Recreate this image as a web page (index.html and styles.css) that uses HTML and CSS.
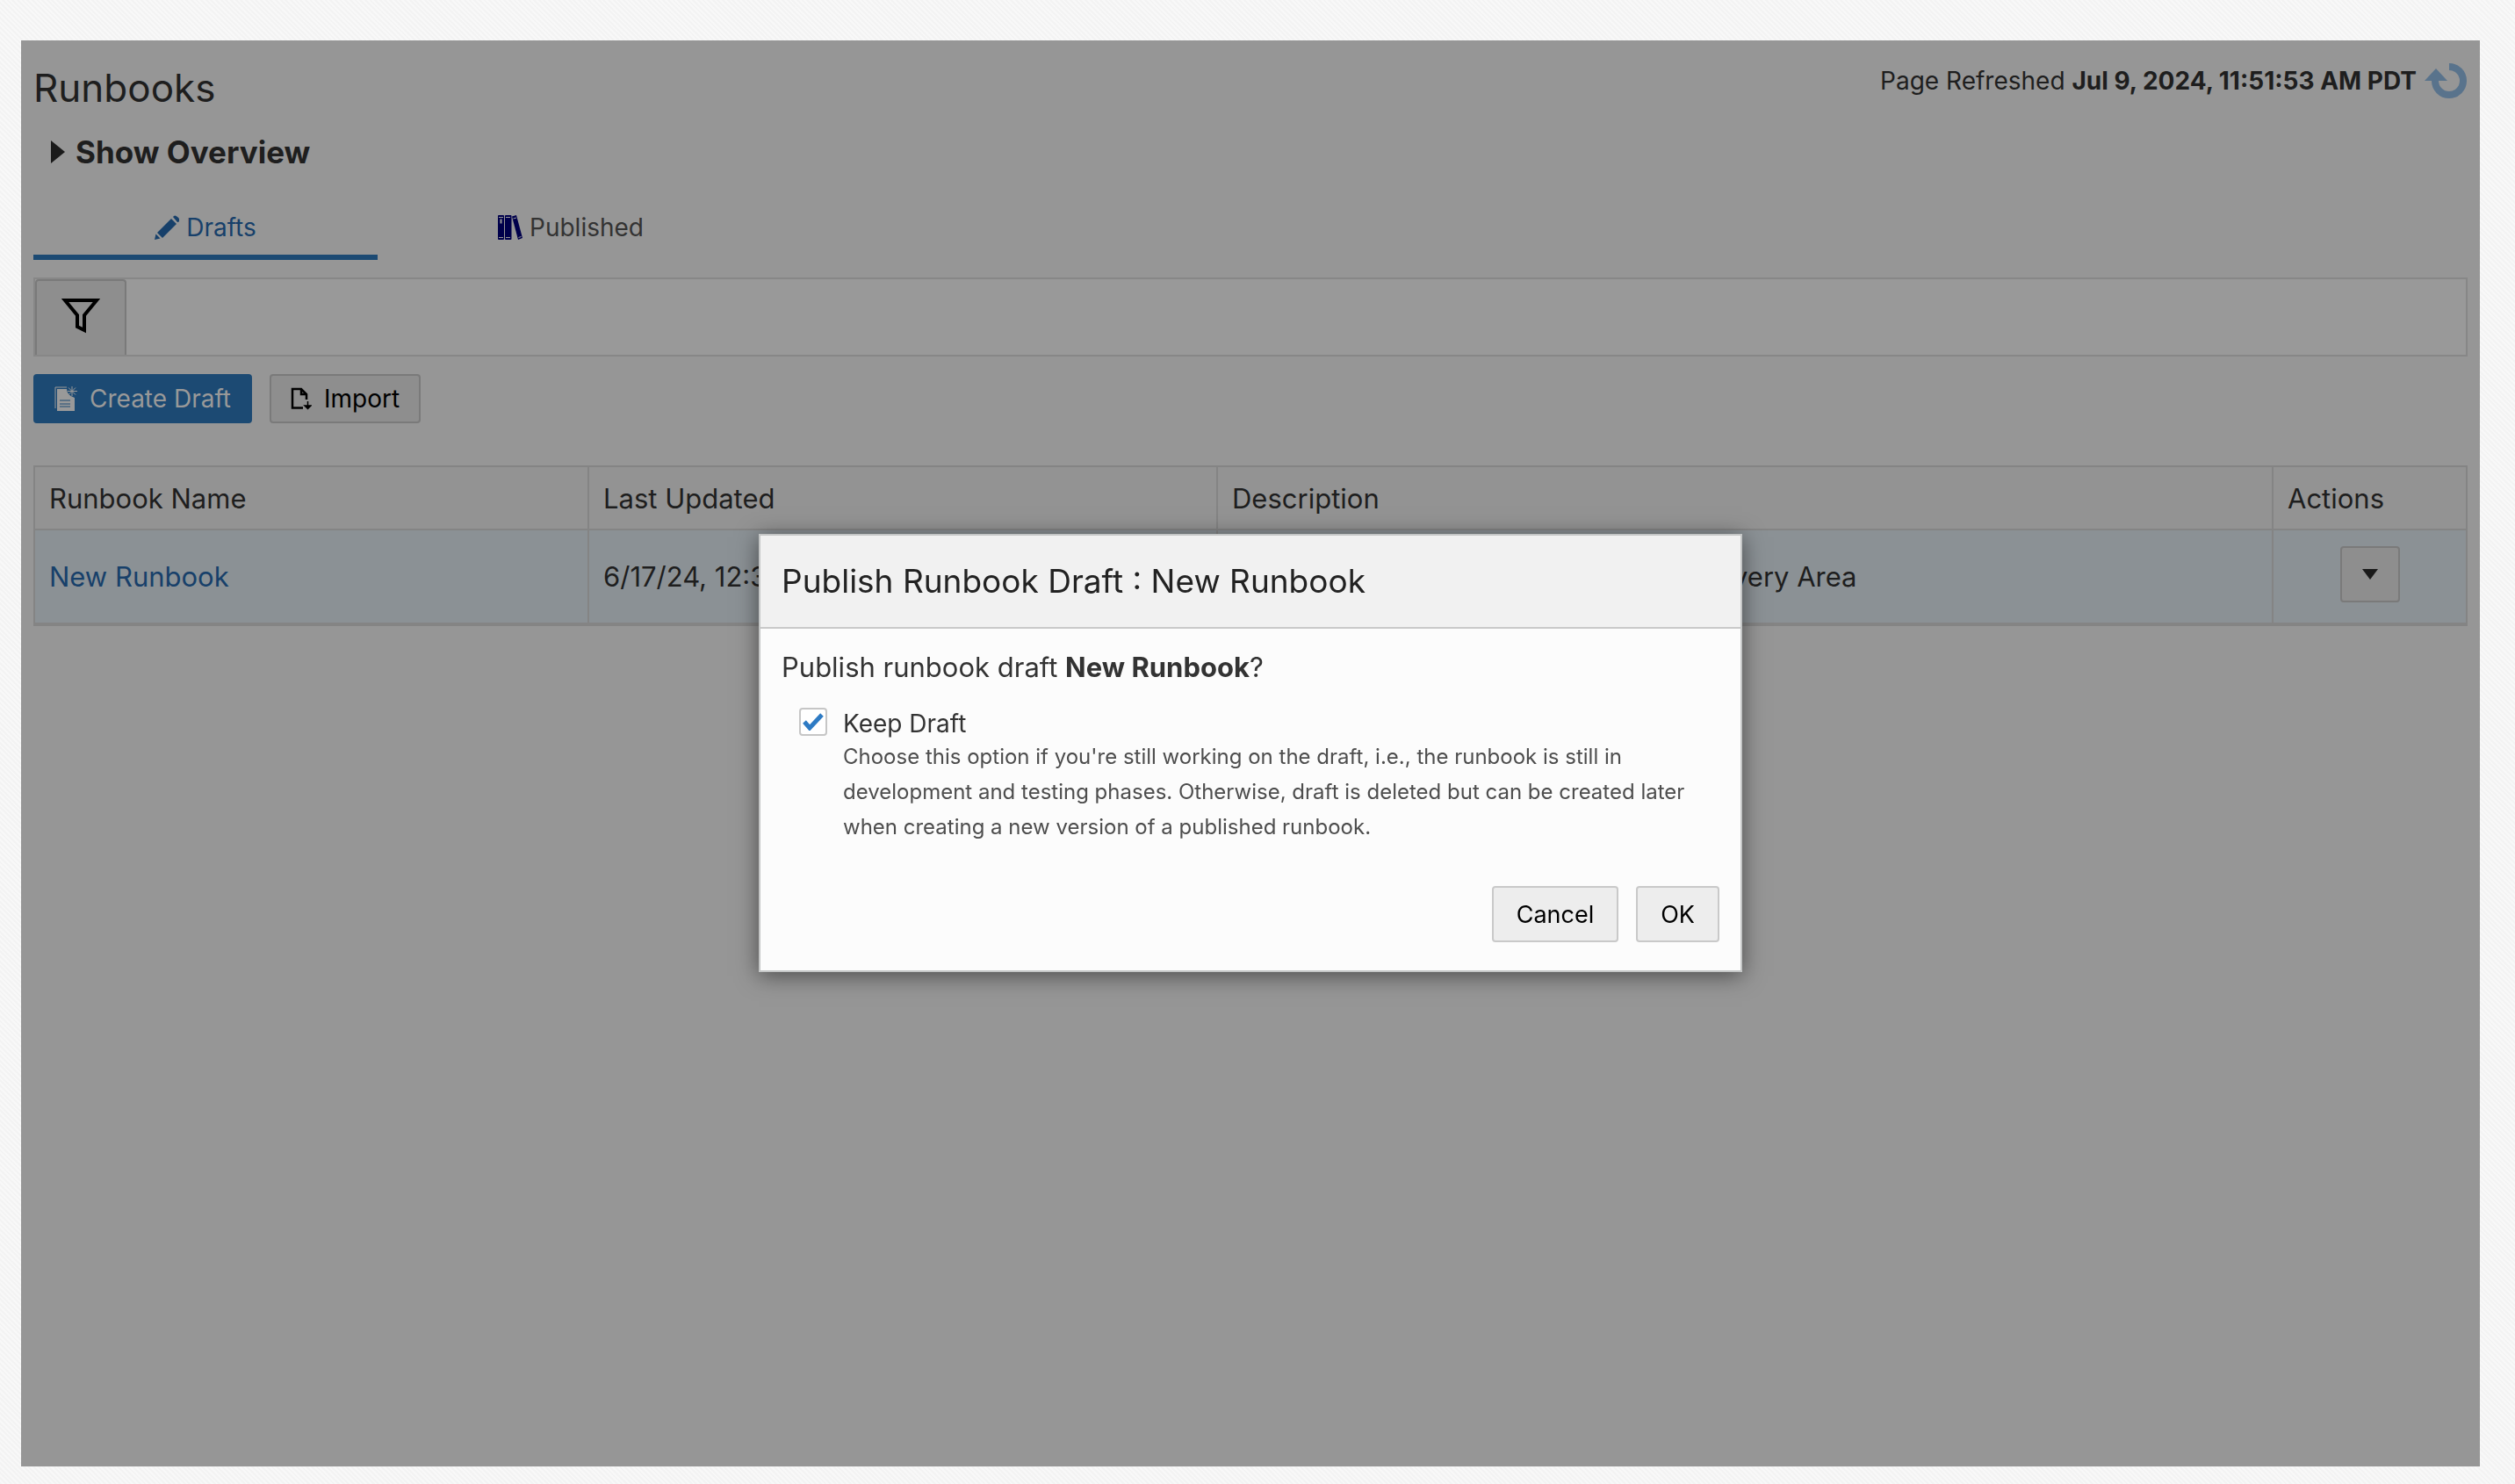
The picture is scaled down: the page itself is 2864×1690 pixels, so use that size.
FILE: index.html
```html
<!DOCTYPE html>
<html lang="en">
<head>
<meta charset="utf-8">
<title>Runbooks</title>
<link rel="stylesheet" href="styles.css">
</head>
<body>
<div class="app">
  <header class="page-head">
    <h1 class="page-title">Runbooks</h1>
    <div class="refreshed">
      <span>Page Refreshed <b>Jul 9, 2024, 11:51:53 AM PDT</b></span>
      <button class="refresh" type="button" aria-label="Refresh page">
        <svg width="50" height="40" viewBox="0 0 50 40"><path d="M29 4A16 16 0 1 1 13 20" fill="none" stroke="#59738c" stroke-width="8"/><path d="M1 20L14 6L27 20Z" fill="#59738c"/></svg>
      </button>
    </div>
  </header>

  <details class="overview">
    <summary class="overview-toggle"><svg width="16" height="26" viewBox="0 0 16 26"><path d="M0 0L16 13L0 26Z" fill="#1a1a1a"/></svg>Show Overview</summary>
  </details>

  <nav class="tabs">
    <a class="tab tab-active" href="#drafts">
      <svg width="28" height="28" viewBox="0 0 28 28" fill="#17406a"><path d="M0 28L1.500 21.500L6.500 26.500Z"/><path d="M3 20L19 4L25 10L9 26Z"/><path d="M21 2Q23-1 26 2Q30 5 27 8L26 8Z"/></svg>
      Drafts
    </a>
    <a class="tab" href="#published">
      <svg width="28" height="28" viewBox="0 0 28 28"><g fill="#00004b"><rect width="7" height="28" rx="1"/><rect x="8" width="7.500" height="28" rx="1"/><path d="M16 1.500L21 0L28 26L23 28Z"/></g><g fill="none" stroke="#969696"><path d="M1 2.500H6M1 25.500H6M9 2.500H14M9 25.500H14M17.500 4L21 3M23.500 25.500L26.500 24.500"/></g><rect x="2.500" y="4.500" width="2" height="5" fill="#969696"/></svg>
      Published
    </a>
  </nav>

  <div class="filter-bar">
    <button class="filter-button" type="button" aria-label="Filter">
      <svg width="44" height="40" viewBox="0 0 44 40"><path d="M4 2H40L26 19V36L18 32V19Z" fill="none" stroke="#000" stroke-width="4"/></svg>
    </button>
    <input class="filter-input" type="text" aria-label="Filter runbooks">
  </div>

  <div class="toolbar">
    <button class="btn btn-primary" type="button">
      <svg width="26" height="28" viewBox="0 0 26 28"><path d="M1 25V1H14" fill="none" stroke="#999" stroke-width="1"/><path d="M3 3H14Q14 10 23 13V28H3Z" fill="#999"/><path d="M6 16H18M6 20H18M6 23H18" stroke="#1c4a73" stroke-width="1"/><path d="M20 0V11M15 5.500H26M16 1.500L24 9.500M24 1.500L16 9.500" stroke="#999" stroke-width="1"/></svg>
      Create Draft
    </button>
    <button class="btn" type="button">
      <svg width="24" height="26" viewBox="0 0 24 26"><path d="M14 23.500H2V2H12L18 8V14M12 2V8H18" fill="none" stroke="#000" stroke-width="2.500"/><path d="M19.500 16V24M16 21L19.500 24.500L23 21Z" fill="#000" stroke="#000" stroke-width="1.500"/></svg>
      Import
    </button>
  </div>

  <table class="runbooks">
    <colgroup><col class="col-name"><col class="col-updated"><col class="col-desc"><col class="col-actions"></colgroup>
    <thead><tr><th>Runbook Name</th><th>Last Updated</th><th>Description</th><th>Actions</th></tr></thead>
    <tbody>
      <tr>
        <td><a class="runbook-link" href="#new-runbook">New Runbook</a></td>
        <td>6/17/24, 12:3</td>
        <td class="description">very Area</td>
        <td class="actions"><button class="menu-button" type="button" aria-label="Actions"><svg width="18" height="12" viewBox="0 0 18 12"><path d="M0 0H18L9 12Z" fill="#1a1a1a"/></svg></button></td>
      </tr>
    </tbody>
  </table>
</div>

<div class="overlay">
<form class="dialog" role="dialog" aria-labelledby="dialog-title">
  <h2 class="dialog-title" id="dialog-title">Publish Runbook Draft : New Runbook</h2>
  <div class="dialog-body">
    <p class="question">Publish runbook draft <b>New Runbook</b>?</p>
    <div class="option">
      <span class="check">
        <input class="checkbox" type="checkbox" id="keep" checked>
        <svg class="tick" width="24" height="20" viewBox="0 0 24 20"><path d="M2 10L8 17L22 2" fill="none" stroke="#2e7bc4" stroke-width="5"/></svg>
      </span>
      <div class="option-text">
        <label class="option-label" for="keep">Keep Draft</label>
        <p class="hint">Choose this option if you're still working on the draft, i.e., the runbook is still in development and testing phases. Otherwise, draft is deleted but can be created later when creating a new version of a published runbook.</p>
      </div>
    </div>
    <div class="dialog-actions">
      <button class="dialog-btn" type="button">Cancel</button>
      <button class="dialog-btn" type="button">OK</button>
    </div>
  </div>
</form>
</div>
</body>
</html>
```
FILE: styles.css
```css
* { box-sizing: border-box; }

body {
  margin: 0;
  min-height: 100vh;
  padding: 46px 40px 20px 24px;
  display: flex;
  background: repeating-linear-gradient(45deg, #f3f3f3 0 2px, #f8f8f8 2px 4px);
  font-family: Inter, "Liberation Sans", sans-serif;
  color: #1e1e1e;
}

button, input { font: inherit; margin: 0; }
h1, h2, p { margin: 0; font-weight: 400; }
svg { display: block; flex: none; }
a { text-decoration: none; }
b { font-weight: 700; }

.app { flex: 1; padding: 20px 14px; background: #969696; }

.page-head { display: flex; justify-content: space-between; height: 80px; }
.page-title { font-size: 44px; line-height: 68px; }
.refreshed { display: flex; align-items: center; gap: 8px; height: 52px; font-size: 28px; }
.refresh { padding: 0; border: 0; background: none; }

.overview { height: 72px; }
.overview-toggle { display: flex; align-items: center; gap: 12px; padding-left: 20px; list-style: none; font-size: 35px; font-weight: 700; line-height: 54px; }

.tabs { display: flex; gap: 24px; height: 78px; }
.tab { display: flex; justify-content: center; align-items: center; gap: 8px; width: 392px; padding-top: 10px; border-bottom: 6px solid transparent; color: #333; font-size: 28px; }
.tab-active { border-color: #1c4a73; color: #17406a; }

.filter-bar { display: flex; height: 90px; margin-top: 20px; border: 2px solid #878787; background: #999; }
.filter-button { display: flex; align-items: center; justify-content: center; width: 104px; padding: 0 0 4px; border: 2px solid #7a7a7a; border-bottom: 0; border-radius: 4px 4px 0 0; background: #8e8e8e; }
.filter-input { flex: 1; border: 0; background: none; }

.toolbar { display: flex; gap: 20px; margin: 20px 0 48px; }
.btn { display: flex; align-items: center; gap: 14px; height: 56px; padding: 0 22px 0 22px; border: 2px solid #7a7a7a; border-radius: 4px; background: #8e8e8e; color: #000; font-size: 28px; }
.btn-primary { border-color: #1c4a73; background: #1c4a73; color: #999; }

.runbooks { width: 100%; table-layout: fixed; border-collapse: collapse; border: 2px solid #848484; border-bottom-width: 4px; font-size: 31px; }
.col-name { width: 631px; }
.col-updated { width: 716px; }
.col-actions { width: 221px; }
.runbooks th, .runbooks td { padding: 0 16px; border: 2px solid #848484; text-align: left; font-weight: 400; }
.runbooks th { height: 72px; background: #939393; }
.runbooks td { height: 108px; background: #8b9195; }
.runbooks tbody tr td { border-bottom-width: 4px; }
.runbook-link { color: #17406a; }
.runbooks .description { padding-left: 586px; }
.runbooks .actions { padding-top: 18px; text-align: center; vertical-align: top; }
.menu-button { display: inline-flex; align-items: center; justify-content: center; width: 68px; height: 64px; padding: 0; border: 2px solid #7a7a7a; border-radius: 4px; background: #8e8e8e; vertical-align: top; }

.overlay { position: fixed; inset: 0; display: flex; align-items: flex-start; justify-content: center; padding: 608px 16px 0 0; }
.dialog { width: 1120px; border: 2px solid #c4c6c6; background: #fcfcfc; box-shadow: 0 4px 24px rgba(0, 0, 0, .5); }
.dialog-title { padding: 0 24px; border-bottom: 2px solid #c9c9c9; background: #f1f1f1; color: #222; font-size: 37px; line-height: 104px; }
.dialog-body { padding: 18px 24px 32px; color: #333; }
.question { font-size: 31px; line-height: 52px; }
.option { display: flex; gap: 18px; padding: 20px 20px 0; }
.check { position: relative; width: 32px; height: 36px; flex: none; }
.checkbox { appearance: none; display: block; width: 32px; height: 32px; border: 2px solid #c6c6c6; border-radius: 4px; background: #fff; }
.tick { position: absolute; left: 4px; top: 6px; pointer-events: none; }
.option-label { display: block; font-size: 28px; line-height: 36px; }
.hint { color: #4d4d4d; font-size: 24px; line-height: 40px; }
.dialog-actions { display: flex; justify-content: flex-end; gap: 20px; margin-top: 47px; }
.dialog-btn { height: 64px; padding: 0 26px; border: 2px solid #c9c9c9; border-radius: 4px; background: #ededed; color: #000; font-size: 27px; }
```
